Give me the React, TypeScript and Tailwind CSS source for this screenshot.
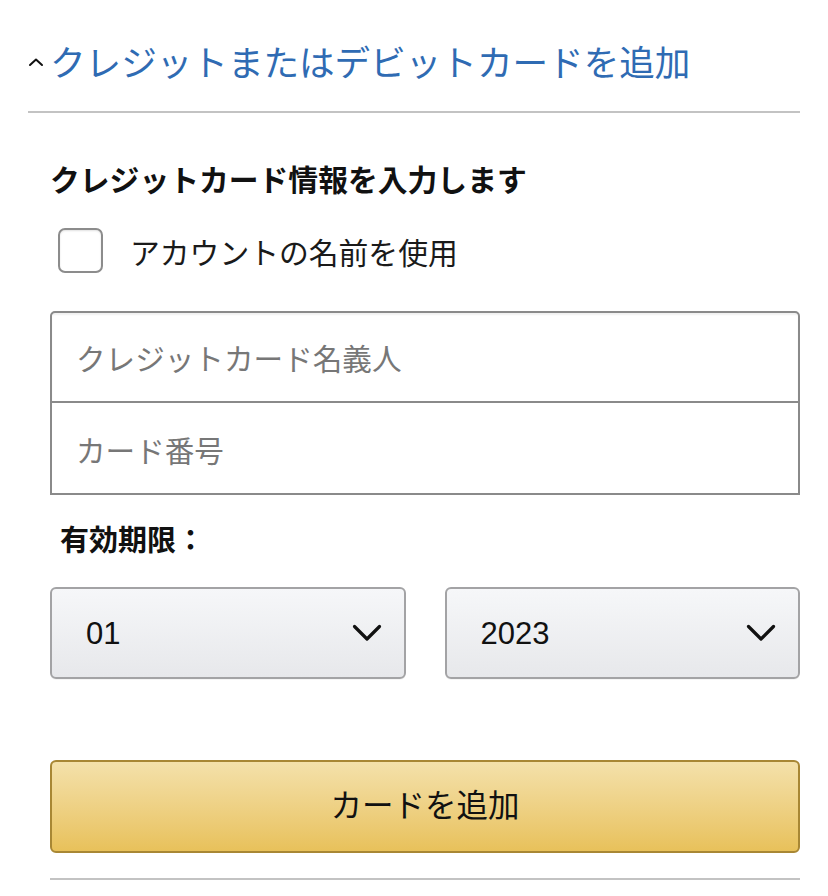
import React from 'react';

const font = { fontFamily: '"Liberation Sans", "Noto Sans CJK JP", sans-serif' };

function Chevron() {
  return (
    <svg width="30" height="20" viewBox="0 0 30 20" fill="none">
      <path d="M2.5 3.5 L15 16 L27.5 3.5" stroke="#111" strokeWidth="3.2" strokeLinecap="round" strokeLinejoin="round" />
    </svg>
  );
}

function Select({ value }: { value: string }) {
  return (
    <div className="h-[92px] flex items-center justify-between pl-[34px] pr-[22px] border-2 border-[#a3a3a5] rounded-[6px] bg-gradient-to-b from-[#f6f7f9] to-[#e7e8eb] shadow-[0_1px_0_rgba(0,0,0,0.04)]">
      <span className="text-[31px] text-[#111] leading-none">{value}</span>
      <Chevron />
    </div>
  );
}

export default function App() {
  return (
    <div className="w-[828px] h-[896px] bg-white" style={font}>
      <div className="mx-[28px] pt-[42px] pb-[25px] border-b-2 border-[#c3c3c3]">
        <div className="flex items-center">
          <svg width="16" height="10" viewBox="0 0 16 10" fill="none" className="ml-[0px] mr-[6px] mt-[-4px]">
            <path d="M2 8 L8 2.5 L14 8" stroke="#111" strokeWidth="2" strokeLinecap="round" strokeLinejoin="round" />
          </svg>
          <span className="text-[35.6px] leading-[44px] text-[#2f6bb3]">クレジットまたはデビットカードを追加</span>
        </div>
      </div>

      <div className="ml-[50px] mr-[28px]">
        <h2 className="mt-[50px] text-[29.8px] leading-[36px] font-bold text-[#111]">クレジットカード情報を入力します</h2>

        <label className="mt-[29px] flex items-center">
          <span className="ml-[8px] w-[45px] h-[45px] rounded-[7px] border-2 border-[#8c8c8c] bg-white shadow-[inset_0_1px_2px_rgba(0,0,0,0.12)]" />
          <span className="ml-[27px] mt-[6px] text-[29.8px] leading-[36px] text-[#1a1a1a]">アカウントの名前を使用</span>
        </label>

        <div className="mt-[38px] border-2 border-[#8a8a8a] rounded-t-[5px]">
          <div className="h-[90px] flex items-center pl-[24px] pt-[5px] border-b-2 border-[#8a8a8a] shadow-[inset_0_2px_2px_rgba(0,0,0,0.06)]">
            <span className="text-[29.6px] text-[#777] leading-none">クレジットカード名義人</span>
          </div>
          <div className="h-[90px] flex items-center pl-[24px] pt-[8px]">
            <span className="text-[29.6px] text-[#777] leading-none">カード番号</span>
          </div>
        </div>

        <div className="mt-[28px] ml-[10px] text-[29px] leading-[36px] font-bold text-[#111]">有効期限：</div>

        <div className="mt-[28px] grid grid-cols-2 gap-[39px]">
          <Select value="01" />
          <Select value="2023" />
        </div>

        <button className="mt-[81px] w-full h-[93px] flex items-center justify-center border-2 border-[#a88734] rounded-[6px] bg-gradient-to-b from-[#f4e1aa] to-[#e8c15a]">
          <span className="text-[31.5px] text-[#111] leading-none">カードを追加</span>
        </button>

        <div className="mt-[25px] border-b-2 border-[#c3c3c3]" />
      </div>
    </div>
  );
}
